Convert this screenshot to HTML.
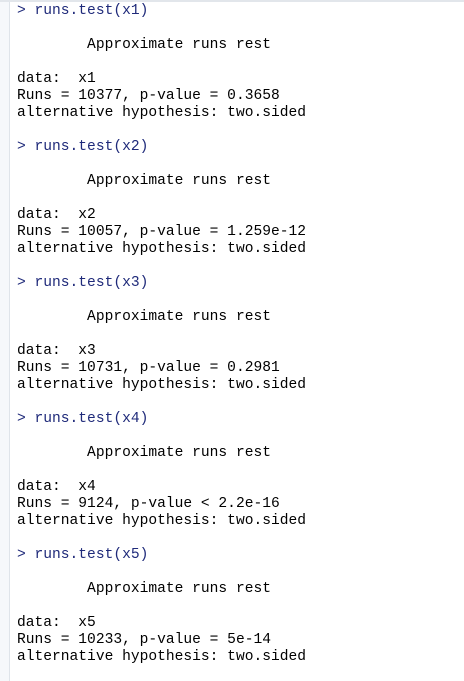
<!DOCTYPE html>
<html><head><style>
html,body{margin:0;padding:0;background:#fff;width:464px;height:681px;overflow:hidden}
.strip{position:absolute;left:0;top:0;width:9px;height:681px;background:#f6f8fb;border-right:1px solid #dfe4ea}
.top{position:absolute;left:0;top:0;width:464px;height:2px;background:#e2e6eb}
pre{position:absolute;left:17px;top:3px;margin:0;font-family:"Liberation Mono",monospace;font-size:14.6px;line-height:17px;color:#000}
.c{color:#1f2a7a}
</style></head><body>
<div class="strip"></div><div class="top"></div>
<pre><span class="c">&gt; runs.test(x1)</span>

        Approximate runs rest

data:  x1
Runs = 10377, p-value = 0.3658
alternative hypothesis: two.sided

<span class="c">&gt; runs.test(x2)</span>

        Approximate runs rest

data:  x2
Runs = 10057, p-value = 1.259e-12
alternative hypothesis: two.sided

<span class="c">&gt; runs.test(x3)</span>

        Approximate runs rest

data:  x3
Runs = 10731, p-value = 0.2981
alternative hypothesis: two.sided

<span class="c">&gt; runs.test(x4)</span>

        Approximate runs rest

data:  x4
Runs = 9124, p-value &lt; 2.2e-16
alternative hypothesis: two.sided

<span class="c">&gt; runs.test(x5)</span>

        Approximate runs rest

data:  x5
Runs = 10233, p-value = 5e-14
alternative hypothesis: two.sided
</pre>
</body></html>
